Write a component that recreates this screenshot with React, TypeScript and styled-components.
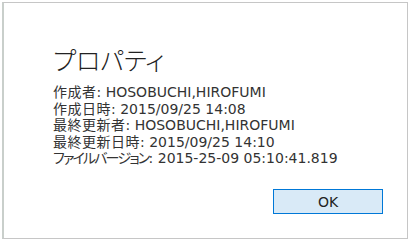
import styled, { createGlobalStyle } from "styled-components"

const GlobalStyle = createGlobalStyle`
    html, body {
        margin: 0;
        padding: 0;
        background: #ffffff;
    }
    body {
        font-family: "DejaVu Sans", "Noto Sans CJK JP", sans-serif;
        color: #333333;
    }
`

const Dialog = styled.div`
    box-sizing: border-box;
    margin: 2px 0 0 2px;
    width: 406px;
    height: 237px;
    background: white;
    border: 1px solid #c6c6c6;
    border-left: 2px solid #c9cfcb;
    display: flex;
    flex-direction: column;
    padding: 40px 24px 24px 49px;
`

const Title = styled.h1`
    margin: 0;
    font-family: "Noto Sans CJK JP", sans-serif;
    font-feature-settings: "palt";
    font-size: 25px;
    font-weight: 300;
    line-height: 32px;
    color: #222222;
`

const Info = styled.div`
    margin-top: 8px;
    display: flex;
    flex-direction: column;
`

const Row = styled.div`
    font-size: 14px;
    line-height: 16.5px;
    height: 16.5px;
    color: #333333;
    white-space: nowrap;
`

const Label = styled.span<{ $kana?: boolean }>`
    font-family: "Noto Sans CJK JP", sans-serif;
    font-feature-settings: "palt";
    letter-spacing: ${(p) => (p.$kana ? "-1.8px" : "0.5px")};
`

const Footer = styled.div`
    margin-top: auto;
    display: flex;
    justify-content: flex-end;
`

const Button = styled.button`
    box-sizing: border-box;
    width: 110px;
    height: 25px;
    background: #d9eaf7;
    border: 1px solid #0078d7;
    font-family: "DejaVu Sans", sans-serif;
    font-size: 14px;
    color: #222222;
    padding: 0;
`

const rows = [
    { label: "作成者", value: "HOSOBUCHI,HIROFUMI" },
    { label: "作成日時", value: "2015/09/25 14:08" },
    { label: "最終更新者", value: "HOSOBUCHI,HIROFUMI" },
    { label: "最終更新日時", value: "2015/09/25 14:10" },
    { label: "ファイルバージョン", value: "2015-25-09 05:10:41.819", kana: true },
]

const App = () => {
    return (
        <>
            <GlobalStyle />
            <Dialog>
                <Title>プロパティ</Title>
                <Info>
                    {rows.map((r) => (
                        <Row key={r.label}>
                            <Label $kana={r.kana}>{r.label}</Label>: {r.value}
                        </Row>
                    ))}
                </Info>
                <Footer>
                    <Button>OK</Button>
                </Footer>
            </Dialog>
        </>
    )
}

export default App
